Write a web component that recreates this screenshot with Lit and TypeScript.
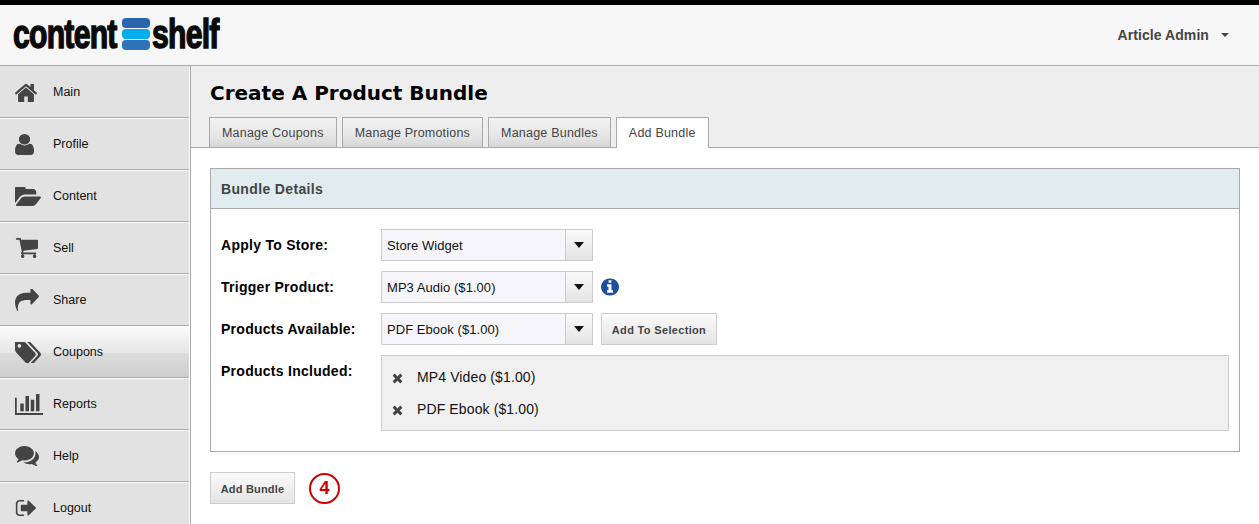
import { LitElement, html, css, svg } from "lit";
import { customElement } from "lit/decorators.js";

const P: Record<string, [string, string, number, number]> = {
  home: ["97 192 1598 1344", "M1472 992v480q0 26-19 45t-45 19h-384v-384h-256v384h-384q-26 0-45-19t-19-45v-480q0-1 .5-3t.5-3l575-474 575 474q1 2 1 6zm223-69l-62 74q-8 9-21 11h-3q-13 0-21-7l-692-577-692 577q-12 8-24 7-13-2-21-11l-62-74q-8-10-7-23.5t11-21.5l719-599q32-26 76-26t76 26l244 204v-195q0-14 9-23t23-9h192q14 0 23 9t9 23v408l219 182q10 8 11 21.5t-7 23.5z", 22, 19],
  user: ["256 128 1280 1536", "M1536 1399q0 109-62.5 187t-150.5 78h-854q-88 0-150.5-78t-62.5-187q0-85 8.5-160.5t31.5-152 58.5-131 94-89 134.5-34.5q131 128 313 128t313-128q76 0 134.5 34.5t94 89 58.5 131 31.5 152 8.5 160.5zm-256-887q0 159-112.5 271.5t-271.5 112.5-271.5-112.5-112.5-271.5 112.5-271.5 271.5-112.5 271.5 112.5 112.5 271.5z", 19, 21],
  folder: ["0 256 1879 1280", "M1879 952q0 31-31 66l-336 396q-43 51-120.5 86.5t-143.5 35.5h-1088q-34 0-60.5-13t-26.5-43q0-31 31-66l336-396q43-51 120.5-86.5t143.5-35.5h1088q34 0 60.5 13t26.5 43zm-343-344v160h-832q-94 0-197 47.5t-164 119.5l-337 396-5 6q0-4-.5-12.5t-.5-12.5v-960q0-92 66-158t158-66h320q92 0 158 66t66 158v32h544q92 0 158 66t66 158z", 26, 19],
  cart: ["0 256 1728 1408", "M704 1536q0 52-38 90t-90 38-90-38-38-90 38-90 90-38 90 38 38 90zm896 0q0 52-38 90t-90 38-90-38-38-90 38-90 90-38 90 38 38 90zm128-1088v512q0 24-16.5 42.5t-40.5 21.5l-1044 122q13 60 13 70 0 16-24 64h920q26 0 45 19t19 45-19 45-45 19h-1024q-26 0-45-19t-19-45q0-11 8-31.5t16-36 21.5-40 15.5-29.5l-177-823h-204q-26 0-45-19t-19-45 19-45 45-19h256q16 0 28.5 6.5t19.5 15.5 13 24.5 8 26 5.5 29.5 4.5 26h1201q26 0 45 19t19 45z", 23, 20],
  share: ["0 128 1792 1536", "M1792 640q0 26-19 45l-512 512q-19 19-45 19t-45-19-19-45v-256h-224q-98 0-175.5 6t-154 21.5-133 42.5-105.5 69.5-80 101-48.5 138.5-17.5 181q0 55 5 123 0 6 2.5 23.5t2.5 26.5q0 15-8.5 25t-23.5 10q-16 0-28-17-7-9-13-22t-13.5-30-10.5-24q-127-285-127-451 0-199 53-333 162-403 875-403h224v-256q0-26 19-45t45-19 45 19l512 512q19 19 19 45z", 24, 22],
  tags: ["0 192 1899 1408", "M448 448q0-53-37.5-90.5t-90.5-37.5-90.5 37.5-37.5 90.5 37.5 90.5 90.5 37.5 90.5-37.5 37.5-90.5zm1067 576q0 53-37 90l-491 492q-39 37-91 37-53 0-90-37l-715-716q-38-37-64.5-101t-26.5-117v-416q0-52 38-90t90-38h416q53 0 117 26.5t102 64.5l715 714q37 39 37 91zm384 0q0 53-37 90l-491 492q-39 37-91 37-36 0-59-14t-53-45l470-470q37-37 37-90 0-52-37-91l-715-714q-38-38-102-64.5t-117-26.5h224q53 0 117 26.5t102 64.5l715 714q37 39 37 91z", 26, 21],
  chart: ["0 256 2048 1408", "M640 896v512h-256v-512h256zm384-512v1024h-256v-1024h256zm1024 1152v128h-2048v-1152h128v1024h1920zm-640-896v768h-256v-768h256zm384-384v1152h-256v-1152h256z", 28, 21],
  comments: ["0 256 1792 1408", "M1408 768q0 139-94 257t-256.5 186.5-353.5 68.5q-86 0-176-16-124 88-278 128-36 9-86 16h-3q-11 0-20.5-8t-11.5-21q-1-3-1-6.5t.5-6.5 2-6l2.5-5 3.5-5.5 4-5 4.5-5 4-4.5q5-6 23-25t26-29.5 22.5-29 25-38.5 20.5-44q-124-72-195-177t-71-224q0-139 94-257t256.5-186.5 353.5-68.5 353.5 68.5 256.5 186.5 94 257zm384 256q0 120-71 224.5t-195 176.5q10 24 20.5 44t25 38.5 22.5 29 26 29.5 23 25q1 1 4 4.5t4.5 5 4 5 3.5 5.5l2.5 5 2 6 .5 6.5-1 6.5q-3 14-13 22t-22 7q-50-7-86-16-154-40-278-128-90 16-176 16-271 0-472-132 58 4 88 4 161 0 309-45t264-129q125-92 192-212t67-254q0-77-23-152 129 71 204 178t75 230z", 24, 20],
  logout: ["0 256 1632 1280", "M704 1440q0 4 1 20t.5 26.5-3 23.5-10 19.5-20.5 6.5h-320q-119 0-203.5-84.5t-84.5-203.5v-704q0-119 84.5-203.5t203.5-84.5h320q13 0 22.5 9.5t9.5 22.5q0 4 1 20t.5 26.5-3 23.5-10 19.5-20.5 6.5h-320q-66 0-113 47t-47 113v704q0 66 47 113t113 47h312l11.5 1 11.5 3 8 5.5 7 9 2 13.5zm928-544q0 26-19 45l-544 544q-19 19-45 19t-45-19-19-45v-288h-448q-26 0-45-19t-19-45v-384q0-26 19-45t45-19h448v-288q0-26 19-45t45-19 45 19l544 544q19 19 19 45z", 21, 16],
  info: ["0 0 1536 1792", "M1024 1376v-160q0-14-9-23t-23-9h-96v-512q0-14-9-23t-23-9h-320q-14 0-23 9t-9 23v160q0 14 9 23t23 9h96v320h-96q-14 0-23 9t-9 23v160q0 14 9 23t23 9h448q14 0 23-9t9-23zm-128-896v-160q0-14-9-23t-23-9h-192q-14 0-23 9t-9 23v160q0 14 9 23t23 9h192q14 0 23-9t9-23zm640 416q0 209-103 385.5t-279.5 279.5-385.5 103-385.5-103-279.5-279.5-103-385.5 103-385.5 279.5-279.5 385.5-103 385.5 103 279.5 279.5 103 385.5z", 18, 20],
  times: ["0 0 1408 1792", "M1298 1322q0 40-28 68l-136 136q-28 28-68 28t-68-28l-294-294-294 294q-28 28-68 28t-68-28l-136-136q-28-28-28-68t28-68l294-294-294-294q-28-28-28-68t28-68l136-136q28-28 68-28t68 28l294 294 294-294q28-28 68-28t68 28l136 136q28 28 28 68t-28 68l-294 294 294 294q28 28 28 68z", 11, 14],
};

const icon = (n: string, cls: string) =>
  html`<svg class=${cls} viewBox=${P[n][0]} width=${P[n][2]} height=${P[n][3]} preserveAspectRatio="none" aria-hidden="true">${svg`<path d=${P[n][1]}></path>`}</svg>`;

const NAV: [string, string, boolean][] = [
  ["home", "Main", false],
  ["user", "Profile", false],
  ["folder", "Content", false],
  ["cart", "Sell", false],
  ["share", "Share", false],
  ["tags", "Coupons", true],
  ["chart", "Reports", false],
  ["comments", "Help", false],
  ["logout", "Logout", false],
];

@customElement("app-root")
export class AppRoot extends LitElement {
  static styles = css`
    :host { display: block; width: 1259px; height: 524px; overflow: hidden; background: #fff; font-family: "Liberation Sans", Arial, sans-serif; color: #111; }
    .top { height: 60px; border-top: 5px solid #000; border-bottom: 1px solid #aaa; background: #f6f6f6; display: flex; align-items: center; justify-content: space-between; }
    .logo { display: flex; align-items: center; margin-left: 13px; height: 60px; }
    .lw { font-weight: 700; font-size: 41px; letter-spacing: -1px; color: #0a0a0a; -webkit-text-stroke: 1.5px #0a0a0a; transform: scaleX(.735); line-height: 40px; margin-top: -3px; display: block; white-space: nowrap; transform-origin: left center; }
    .lw.a { width: 105px; }
    .lw.b { width: 70px; }
    .stack { width: 28px; display: flex; flex-direction: column; gap: 1px; margin: -3px 2px 0 4px; }
    .stack i { display: block; height: 10px; border-radius: 4px; background: #2a66ad; }
    .stack i:nth-child(2) { background: #00aeef; }
    .stack i:nth-child(3) { background: #2e72b8; }
    .user { display: flex; align-items: center; margin-right: 30px; margin-top: -1px; font-size: 14px; font-weight: 700; color: #444; letter-spacing: .08px; }
    .caret { width: 0; height: 0; border: 4px solid transparent; border-top: 4px solid #444; border-bottom: 0; margin-left: 12px; }
    .body { display: flex; height: 458px; }
    nav { width: 190px; flex: none; border-right: 1px solid #aaa; box-sizing: content-box; background: #fff; padding-top: 1px; box-shadow: inset 0 1px 0 #e2e2e2; }
    .item { height: 51px; box-sizing: border-box; display: flex; align-items: center; background: #e2e2e2; margin-bottom: 1px; margin-right: 1px; padding-bottom: 1px; font-size: 12.5px; color: #111; position: relative; }
    .item::after { content: ""; position: absolute; left: 0; right: 0; bottom: 0; height: 1px; background: #aaa; }
    .item.on { background: linear-gradient(#fbfbfb 0, #e6e6e6 50%, #dcdcdc 52%, #cdcdcd 100%); }
    .ic { width: 38px; margin-left: 15px; display: flex; }
    .ni { fill: #444; }
    main { flex: 1; min-width: 0; }
    .head { background: #eee; height: 82px; box-sizing: border-box; border-bottom: 1px solid #aaa; padding: 0 0 0 19px; display: flex; flex-direction: column; justify-content: flex-end; }
    h1 { margin: 0 0 9px; font: 700 20px/30px "DejaVu Sans", Verdana, sans-serif; color: #000; }
    .tabs { display: flex; gap: 5px; margin-bottom: -1px; margin-left: -1px; }
    .tab { height: 30px; box-sizing: border-box; border: 1px solid #aaa; border-bottom: 0; display: flex; align-items: center; padding: 0 12px; font-size: 12.5px; letter-spacing: .21px; color: #444; background: linear-gradient(#f2f2f2 0, #e6e6e6 60%, #d6d6d6 100%); }
    .tab.on { background: #fff; height: 31px; }
    .panel { margin: 20px 19px 0 19px; border: 1px solid #aaa; }
    .ph { height: 39px; background: #e0ecf0; border-bottom: 1px solid #aaa; padding-left: 10px; display: flex; align-items: center; font-weight: 700; font-size: 14px; letter-spacing: .35px; color: #444; }
    .pb { padding: 20px 10px; display: grid; grid-template-columns: 160px 1fr; row-gap: 10px; }
    .lab { font-size: 14px; font-weight: 700; letter-spacing: .27px; color: #000; line-height: 32px; }
    .ctl { display: flex; align-items: center; gap: 8px; }
    .sel { width: 212px; height: 32px; box-sizing: border-box; border: 1px solid #ccc; background: #f5f5fa; display: flex; font-size: 13px; letter-spacing: .05px; color: #111; }
    .st { flex: 1; display: flex; align-items: center; padding-left: 5px; }
    .sa { width: 26px; border-left: 1px solid #ccc; background: linear-gradient(#fafafa, #e4e4e4); display: flex; align-items: center; justify-content: center; }
    .sa i { width: 0; height: 0; border: 5px solid transparent; border-top: 6px solid #111; border-bottom: 0; }
    .info { fill: #1d4f9c; }
    .btn { height: 32px; box-sizing: border-box; border: 1px solid #ccc; padding-top: 1px; background: linear-gradient(#fafafa, #e4e4e4); display: flex; align-items: center; justify-content: center; font-weight: 700; font-size: 11px; letter-spacing: .2px; color: #444; }
    .b1 { width: 116px; letter-spacing: .33px; }
    .inc { height: 76px; box-sizing: border-box; border: 1px solid #ccc; background: #f0f0f0; padding: 5px 10px; display: flex; flex-direction: column; }
    .row { height: 32px; flex: none; display: flex; align-items: center; font-size: 14px; letter-spacing: .12px; color: #111; }
    .x { fill: #444; margin: 2px 14px 0 0; }
    .foot { margin: 20px 0 0 19px; display: flex; align-items: center; gap: 14px; }
    .b2 { width: 85px; }
    .num { width: 31px; height: 31px; box-sizing: border-box; border: 2px solid #c00; border-radius: 50%; color: #c00; font-weight: 700; font-size: 18px; display: flex; align-items: center; justify-content: center; }
  `;

  render() {
    return html`
      <div class="top">
        <div class="logo">
          <span class="lw a">content</span>
          <span class="stack"><i></i><i></i><i></i></span>
          <span class="lw b">shelf</span>
        </div>
        <div class="user">Article Admin<span class="caret"></span></div>
      </div>
      <div class="body">
        <nav>
          ${NAV.map(([i, t, on]) => html`<div class="item ${on ? "on" : ""}"><span class="ic">${icon(i, "ni")}</span><span>${t}</span></div>`)}
        </nav>
        <main>
          <div class="head">
            <h1>Create A Product Bundle</h1>
            <div class="tabs">
              <div class="tab">Manage Coupons</div>
              <div class="tab">Manage Promotions</div>
              <div class="tab">Manage Bundles</div>
              <div class="tab on">Add Bundle</div>
            </div>
          </div>
          <div class="panel">
            <div class="ph">Bundle Details</div>
            <div class="pb">
              <div class="lab">Apply To Store:</div>
              <div class="ctl"><div class="sel"><span class="st">Store Widget</span><span class="sa"><i></i></span></div></div>
              <div class="lab">Trigger Product:</div>
              <div class="ctl"><div class="sel"><span class="st">MP3 Audio ($1.00)</span><span class="sa"><i></i></span></div>${icon("info", "info")}</div>
              <div class="lab">Products Available:</div>
              <div class="ctl"><div class="sel"><span class="st">PDF Ebook ($1.00)</span><span class="sa"><i></i></span></div><div class="btn b1">Add To Selection</div></div>
              <div class="lab">Products Included:</div>
              <div class="inc">
                <div class="row">${icon("times", "x")}MP4 Video ($1.00)</div>
                <div class="row">${icon("times", "x")}PDF Ebook ($1.00)</div>
              </div>
            </div>
          </div>
          <div class="foot"><div class="btn b2">Add Bundle</div><div class="num">4</div></div>
        </main>
      </div>
    `;
  }
}
